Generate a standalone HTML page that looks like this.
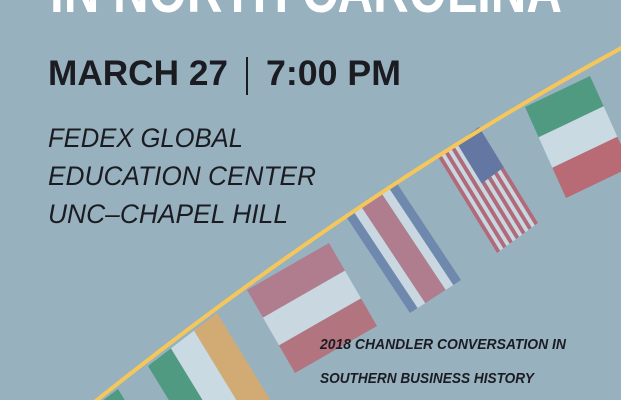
<!DOCTYPE html>
<html><head><meta charset="utf-8"><style>
html,body{margin:0;padding:0;background:#98b1bf;width:621px;height:400px;overflow:hidden}
svg{display:block;position:absolute;left:0;top:0}
</style></head><body>
<svg width="621" height="400" viewBox="0 0 621 400" xmlns="http://www.w3.org/2000/svg" overflow="hidden">
<rect width="621" height="400" fill="#98b1bf"/>
<text x="50" y="12" font-family="Liberation Sans, sans-serif" font-weight="bold" font-size="62" fill="#ffffff" textLength="512" lengthAdjust="spacingAndGlyphs">IN NORTH CAROLINA</text>
<text x="48" y="85" font-family="Liberation Sans, sans-serif" font-weight="bold" font-size="35" fill="#1b1c22" textLength="180" lengthAdjust="spacingAndGlyphs">MARCH 27</text>
<rect x="246" y="57" width="2" height="38" fill="#1b1c22"/>
<text x="266" y="85" font-family="Liberation Sans, sans-serif" font-weight="bold" font-size="35" fill="#1b1c22" textLength="135" lengthAdjust="spacingAndGlyphs">7:00 PM</text>
<g font-family="Liberation Sans, sans-serif" font-style="italic" font-size="27" fill="#1b1c22">
<text x="48" y="147" textLength="195" lengthAdjust="spacingAndGlyphs">FEDEX GLOBAL</text>
<text x="48" y="185" textLength="268" lengthAdjust="spacingAndGlyphs">EDUCATION CENTER</text>
<text x="48" y="223" textLength="240" lengthAdjust="spacingAndGlyphs">UNC–CHAPEL HILL</text>
</g>
<g transform="matrix(0.69,-0.53,0.55,0.90,148,366)">
<rect x="0" y="0" width="33.3" height="100" fill="#4f9a80"/>
<rect x="33.3" y="0" width="33.4" height="100" fill="#cadae3"/>
<rect x="66.7" y="0" width="33.3" height="100" fill="#d2ab74"/>
</g>
<g transform="matrix(0.40,-0.30,0.55,0.90,98,404)">
<rect x="0" y="0" width="50" height="100" fill="#4f9a80"/>
</g>
<g transform="matrix(0.82,-0.47,0.48,0.83,247,290)">
<rect x="0" y="0" width="100" height="33.3" fill="#b07d8e"/>
<rect x="0" y="33.3" width="100" height="33.4" fill="#c8d7e0"/>
<rect x="0" y="66.7" width="100" height="33.3" fill="#b27580"/>
</g>
<g transform="matrix(0.51,-0.33,0.65,0.98,345,215)">
<rect x="0" y="0" width="15" height="100" fill="#6f88ad"/>
<rect x="15" y="0" width="15" height="100" fill="#c8d7e0"/>
<rect x="30" y="0" width="40" height="100" fill="#b07d8e"/>
<rect x="70" y="0" width="15" height="100" fill="#c8d7e0"/>
<rect x="85" y="0" width="15" height="100" fill="#6f88ad"/>
</g>
<g transform="matrix(0.41,-0.30,0.59,0.96,438,157)">
<rect x="0" y="0" width="100" height="100" fill="#c8d7e0"/>
<rect x="0" y="0" width="7.7" height="100" fill="#b06a7a"/>
<rect x="15.4" y="0" width="7.7" height="100" fill="#b06a7a"/>
<rect x="30.8" y="0" width="7.7" height="100" fill="#b06a7a"/>
<rect x="46.2" y="0" width="7.7" height="100" fill="#b06a7a"/>
<rect x="61.5" y="0" width="7.7" height="100" fill="#b06a7a"/>
<rect x="76.9" y="0" width="7.7" height="100" fill="#b06a7a"/>
<rect x="92.3" y="0" width="7.7" height="100" fill="#b06a7a"/>
<rect x="46.2" y="0" width="53.8" height="42" fill="#6477a2"/>
</g>
<g transform="matrix(0.65,-0.31,0.41,0.91,525,107)">
<rect x="0" y="0" width="100" height="33.3" fill="#4f9a80"/>
<rect x="0" y="33.3" width="100" height="33.4" fill="#cadae3"/>
<rect x="0" y="66.7" width="100" height="33.3" fill="#b86a75"/>
</g>
<path d="M92,404 Q360,190 625,46" fill="none" stroke="#f5c75a" stroke-width="4"/>
<g font-family="Liberation Sans, sans-serif" font-style="italic" font-weight="bold" font-size="15" fill="#1b1c22">
<text x="320" y="349" textLength="246" lengthAdjust="spacingAndGlyphs">2018 CHANDLER CONVERSATION IN</text>
<text x="320" y="383" textLength="214" lengthAdjust="spacingAndGlyphs">SOUTHERN BUSINESS HISTORY</text>
</g>
</svg>
</body></html>
